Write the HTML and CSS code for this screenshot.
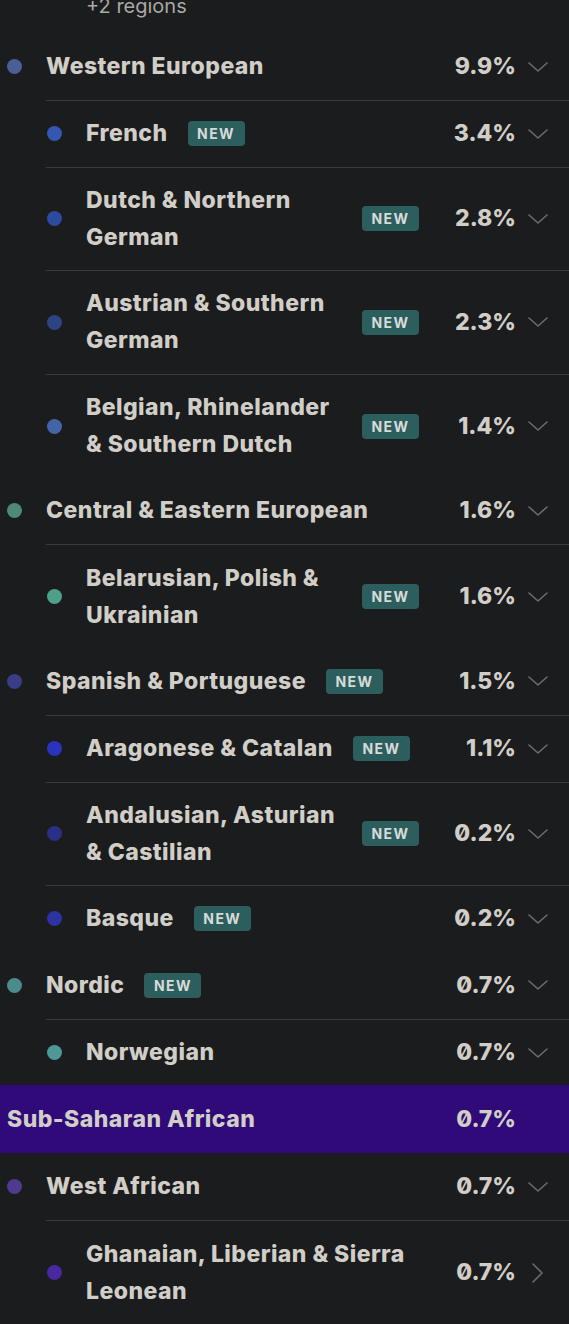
FILE: index.html
```html
<!DOCTYPE html>
<html>
<head>
<meta charset="utf-8">
<link rel="stylesheet" href="styles.css">
</head>
<body>
<div class="list">
  <div class="more">+2 regions</div>

  <div class="row top">
    <span class="dot c-west"></span>
    <div class="label"><span class="name">Western European</span></div>
    <span class="pct">9.9%</span>
    <svg class="chev" viewBox="0 0 20 20"><polyline points="1,6 10,14 19,6"/></svg>
  </div>
  <div class="row child">
    <span class="dot c-french"></span>
    <div class="label"><span class="name">French</span><span class="badge">NEW</span></div>
    <span class="pct">3.4%</span>
    <svg class="chev" viewBox="0 0 20 20"><polyline points="1,6 10,14 19,6"/></svg>
  </div>
  <div class="row child">
    <span class="dot c-dutch"></span>
    <div class="label"><span class="name">Dutch &amp; Northern German</span><span class="badge">NEW</span></div>
    <span class="pct">2.8%</span>
    <svg class="chev" viewBox="0 0 20 20"><polyline points="1,6 10,14 19,6"/></svg>
  </div>
  <div class="row child">
    <span class="dot c-austrian"></span>
    <div class="label"><span class="name">Austrian &amp; Southern German</span><span class="badge">NEW</span></div>
    <span class="pct">2.3%</span>
    <svg class="chev" viewBox="0 0 20 20"><polyline points="1,6 10,14 19,6"/></svg>
  </div>
  <div class="row child">
    <span class="dot c-belgian"></span>
    <div class="label"><span class="name">Belgian, Rhinelander &amp; Southern Dutch</span><span class="badge">NEW</span></div>
    <span class="pct">1.4%</span>
    <svg class="chev" viewBox="0 0 20 20"><polyline points="1,6 10,14 19,6"/></svg>
  </div>

  <div class="row top">
    <span class="dot c-central"></span>
    <div class="label"><span class="name">Central &amp; Eastern European</span></div>
    <span class="pct">1.6%</span>
    <svg class="chev" viewBox="0 0 20 20"><polyline points="1,6 10,14 19,6"/></svg>
  </div>
  <div class="row child">
    <span class="dot c-belarus"></span>
    <div class="label"><span class="name">Belarusian, Polish &amp; Ukrainian</span><span class="badge">NEW</span></div>
    <span class="pct">1.6%</span>
    <svg class="chev" viewBox="0 0 20 20"><polyline points="1,6 10,14 19,6"/></svg>
  </div>

  <div class="row top">
    <span class="dot c-spanish"></span>
    <div class="label"><span class="name">Spanish &amp; Portuguese</span><span class="badge">NEW</span></div>
    <span class="pct">1.5%</span>
    <svg class="chev" viewBox="0 0 20 20"><polyline points="1,6 10,14 19,6"/></svg>
  </div>
  <div class="row child">
    <span class="dot c-aragon"></span>
    <div class="label"><span class="name">Aragonese &amp; Catalan</span><span class="badge">NEW</span></div>
    <span class="pct">1.1%</span>
    <svg class="chev" viewBox="0 0 20 20"><polyline points="1,6 10,14 19,6"/></svg>
  </div>
  <div class="row child">
    <span class="dot c-andal"></span>
    <div class="label"><span class="name">Andalusian, Asturian &amp; Castilian</span><span class="badge">NEW</span></div>
    <span class="pct">0.2%</span>
    <svg class="chev" viewBox="0 0 20 20"><polyline points="1,6 10,14 19,6"/></svg>
  </div>
  <div class="row child">
    <span class="dot c-basque"></span>
    <div class="label"><span class="name">Basque</span><span class="badge">NEW</span></div>
    <span class="pct">0.2%</span>
    <svg class="chev" viewBox="0 0 20 20"><polyline points="1,6 10,14 19,6"/></svg>
  </div>

  <div class="row top">
    <span class="dot c-nordic"></span>
    <div class="label"><span class="name">Nordic</span><span class="badge">NEW</span></div>
    <span class="pct">0.7%</span>
    <svg class="chev" viewBox="0 0 20 20"><polyline points="1,6 10,14 19,6"/></svg>
  </div>
  <div class="row child">
    <span class="dot c-norway"></span>
    <div class="label"><span class="name">Norwegian</span></div>
    <span class="pct">0.7%</span>
    <svg class="chev" viewBox="0 0 20 20"><polyline points="1,6 10,14 19,6"/></svg>
  </div>

  <div class="row band">
    <div class="label"><span class="name">Sub-Saharan African</span></div>
    <span class="pct">0.7%</span>
    <span class="chev-space"></span>
  </div>

  <div class="row top">
    <span class="dot c-westaf"></span>
    <div class="label"><span class="name">West African</span></div>
    <span class="pct">0.7%</span>
    <svg class="chev" viewBox="0 0 20 20"><polyline points="1,6 10,14 19,6"/></svg>
  </div>
  <div class="row child">
    <span class="dot c-ghana"></span>
    <div class="label"><span class="name">Ghanaian, Liberian &amp; Sierra Leonean</span></div>
    <span class="pct">0.7%</span>
    <svg class="chev" viewBox="0 0 20 20"><polyline points="5,1 14,10 5,19"/></svg>
  </div>
</div>
</body>
</html>
```
FILE: styles.css
```css
html, body {
  margin: 0;
  padding: 0;
  background: #1b1c1e;
}
body {
  font-family: Inter, "Noto Sans", "Liberation Sans", sans-serif;
  color: #d1cec8;
  overflow: hidden;
  font-feature-settings: "zero" 1;
}
.list {
  display: flex;
  flex-direction: column;
}
.more {
  margin-top: -6px;
  height: 39px;
  padding-left: 86px;
  font-size: 20px;
  line-height: 24px;
  font-weight: 400;
  color: #aaa8a3;
}
.row {
  display: flex;
  align-items: center;
  padding-right: 21px;
  font-size: 23px;
  font-weight: 800;
  line-height: 37px;
  letter-spacing: 0.45px;
}
.row.top {
  padding-top: 15px;
  padding-bottom: 15px;
  padding-left: 7px;
}
.row.child {
  margin-left: 46px;
  padding-top: 14.3px;
  padding-bottom: 14.3px;
  border-top: 1px solid #3a3b3e;
}
.row.child .dot {
  margin-left: 1px;
}
.row.band {
  background: #300a78;
  padding-top: 15.5px;
  padding-bottom: 15.5px;
  padding-left: 7px;
}
.dot {
  flex: none;
  width: 15px;
  height: 15px;
  border-radius: 50%;
  margin-right: 24px;
}
.label {
  flex: 1;
  min-width: 0;
  display: flex;
  align-items: center;
  gap: 20px;
}
.name {
  flex: 0 1 auto;
  min-width: 0;
}
.badge {
  flex: none;
  width: 57px;
  height: 25px;
  box-sizing: border-box;
  background: #2d5e5e;
  border-radius: 4px;
  color: #d7dbd8;
  font-size: 14px;
  font-weight: 700;
  letter-spacing: 1.4px;
  line-height: 25px;
  text-align: center;
}
.pct {
  flex: none;
  width: 97px;
  text-align: right;
  letter-spacing: 0;
}
.chev {
  flex: none;
  width: 20px;
  height: 20px;
  margin-left: 12px;
  fill: none;
  stroke: #6c6b6f;
  stroke-width: 1.6;
  stroke-linecap: round;
  stroke-linejoin: round;
}
.chev-space {
  flex: none;
  width: 20px;
  margin-left: 12px;
}
.c-west { background: #4a5f97; }
.c-french { background: #3557b3; }
.c-dutch { background: #2c4aa0; }
.c-austrian { background: #2c4482; }
.c-belgian { background: #4564a8; }
.c-central { background: #4d8a78; }
.c-belarus { background: #4f9f89; }
.c-spanish { background: #3a3c86; }
.c-aragon { background: #2a33bd; }
.c-andal { background: #2a2f88; }
.c-basque { background: #2d33a2; }
.c-nordic { background: #4b8b8c; }
.c-norway { background: #4f9898; }
.c-westaf { background: #4e3b8f; }
.c-ghana { background: #4a28a2; }
```
